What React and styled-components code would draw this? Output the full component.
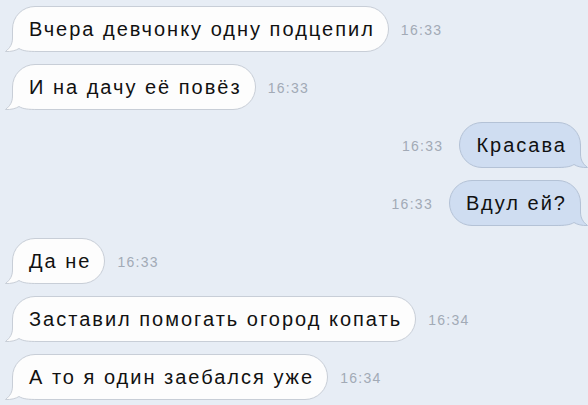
import React from 'react';
import styled, { createGlobalStyle } from 'styled-components';

const GlobalStyle = createGlobalStyle`
  html, body {
    margin: 0;
    padding: 0;
    background: #e7edf5;
  }
  body {
    font-family: "Liberation Sans", Arial, sans-serif;
  }
`;

const Chat = styled.div`
  width: 588px;
  height: 405px;
  box-sizing: border-box;
  padding: 6px 7px 0 12px;
  display: flex;
  flex-direction: column;
  gap: 12px;
  overflow: hidden;
  background: #e7edf5;
`;

const Row = styled.div`
  display: flex;
  align-items: center;
  justify-content: ${p => (p.$out ? 'flex-end' : 'flex-start')};
  gap: ${p => (p.$out ? '16px' : '12px')};
`;

const Bubble = styled.div`
  position: relative;
  box-sizing: border-box;
  height: 46px;
  padding: 0 13px 0 16px;
  display: flex;
  align-items: center;
  border-radius: 23px;
  font-size: 20px;
  letter-spacing: 2px;
  color: #111;
  white-space: nowrap;
  background: ${p => (p.$out ? '#cfddf1' : '#fdfdfd')};
  border: 1px solid ${p => (p.$out ? '#b4c2d6' : '#c8ced7')};
`;

const Label = styled.span`
  position: relative;
  padding-top: 1px;
`;

const Time = styled.span`
  font-size: 14px;
  letter-spacing: 1.3px;
  color: #a2aab6;
  padding-top: 2px;
`;

const TailSvg = styled.svg`
  position: absolute;
  bottom: -1px;
  ${p => (p.$out ? 'right: -9px; transform: scaleX(-1);' : 'left: -9px;')}
  width: 34px;
  height: 24px;
  overflow: visible;
`;

const Tail = ({ out }) => (
  <TailSvg $out={out} viewBox="0 0 34 24">
    <path
      d="M8.5 0 L8.5 10 C8.5 16 6 20 1.5 23.5 C7 23.8 12 22.5 15 20.5 C19 23 24 23.5 34 23.5"
      fill={out ? '#cfddf1' : '#fdfdfd'}
      stroke={out ? '#b4c2d6' : '#c8ced7'}
      strokeWidth="1"
    />
  </TailSvg>
);

const messages = [
  { text: 'Вчера девчонку одну подцепил', time: '16:33' },
  { text: 'И на дачу её повёз', time: '16:33' },
  { text: 'Красава', time: '16:33', out: true },
  { text: 'Вдул ей?', time: '16:33', out: true },
  { text: 'Да не', time: '16:33' },
  { text: 'Заставил помогать огород копать', time: '16:34' },
  { text: 'А то я один заебался уже', time: '16:34' },
];

const Message = ({ text, time, out }) => (
  <Row $out={out}>
    {out && <Time>{time}</Time>}
    <Bubble $out={out}>
      <Tail out={out} />
      <Label>{text}</Label>
    </Bubble>
    {!out && <Time>{time}</Time>}
  </Row>
);

const App = () => (
  <>
    <GlobalStyle />
    <Chat>
      {messages.map((m, i) => (
        <Message key={i} {...m} />
      ))}
    </Chat>
  </>
);

export default App;
